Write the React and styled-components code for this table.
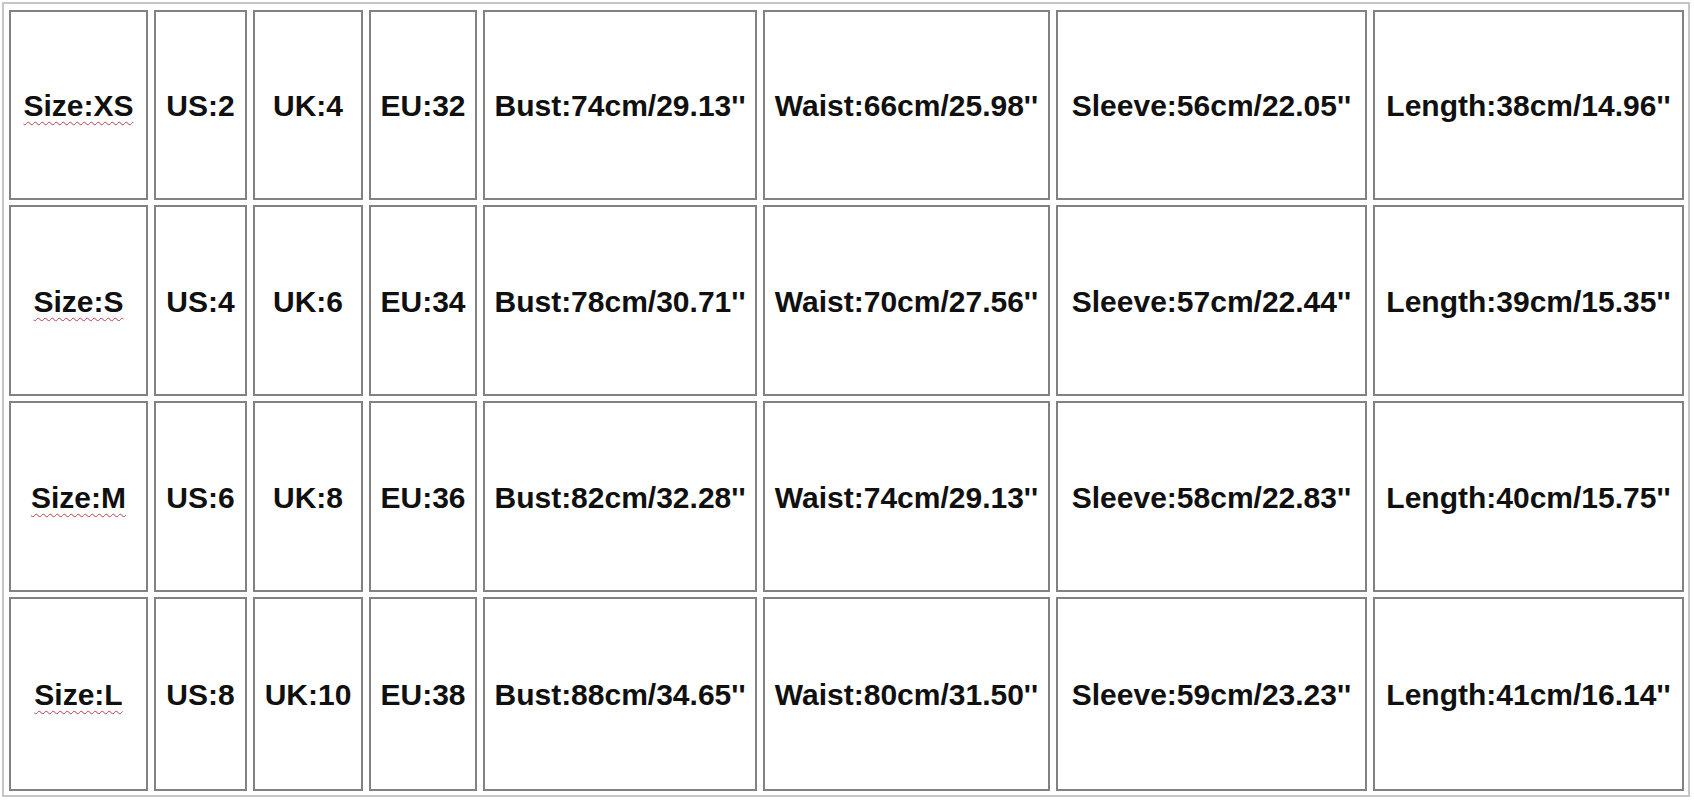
import React from "react";
import styled, { createGlobalStyle } from "styled-components";

const GlobalStyle = createGlobalStyle`
  html, body {
    margin: 0;
    padding: 0;
    background: #ffffff;
  }
  body {
    font-family: "Liberation Sans", Arial, sans-serif;
  }
`;

const Frame = styled.div`
  box-sizing: border-box;
  margin: 2px 0 0 2px;
  width: 1688px;
  border: 2px solid #c6c6c6;
  padding: 6px 4px 4px 5px;
  display: grid;
  grid-template-columns: 139px 93px 110px 108px 274px 287px 311px 311px;
  grid-template-rows: 190px 191px 191px 194px;
  column-gap: 6px;
  row-gap: 5px;
`;

const Cell = styled.div`
  box-sizing: border-box;
  border: 2px solid #828282;
  display: flex;
  align-items: center;
  justify-content: center;
  white-space: nowrap;
  font-family: "Liberation Sans", Arial, sans-serif;
  font-weight: 700;
  font-size: 30px;
  color: #101010;
  padding-top: 2px;
`;

const Label = styled.span`
  text-decoration: ${(p) => (p.$spell ? "underline wavy #b8404a" : "none")};
  text-decoration-thickness: 1.4px;
  text-underline-offset: 5px;
`;

const rows = [
  ["Size:XS", "US:2", "UK:4", "EU:32", "Bust:74cm/29.13''", "Waist:66cm/25.98''", "Sleeve:56cm/22.05''", "Length:38cm/14.96''"],
  ["Size:S", "US:4", "UK:6", "EU:34", "Bust:78cm/30.71''", "Waist:70cm/27.56''", "Sleeve:57cm/22.44''", "Length:39cm/15.35''"],
  ["Size:M", "US:6", "UK:8", "EU:36", "Bust:82cm/32.28''", "Waist:74cm/29.13''", "Sleeve:58cm/22.83''", "Length:40cm/15.75''"],
  ["Size:L", "US:8", "UK:10", "EU:38", "Bust:88cm/34.65''", "Waist:80cm/31.50''", "Sleeve:59cm/23.23''", "Length:41cm/16.14''"],
];

export default function App() {
  return (
    <>
      <GlobalStyle />
      <Frame>
        {rows.map((row, r) =>
          row.map((text, c) => (
            <Cell key={`${r}-${c}`}>
              <Label $spell={c === 0}>{text}</Label>
            </Cell>
          ))
        )}
      </Frame>
    </>
  );
}
